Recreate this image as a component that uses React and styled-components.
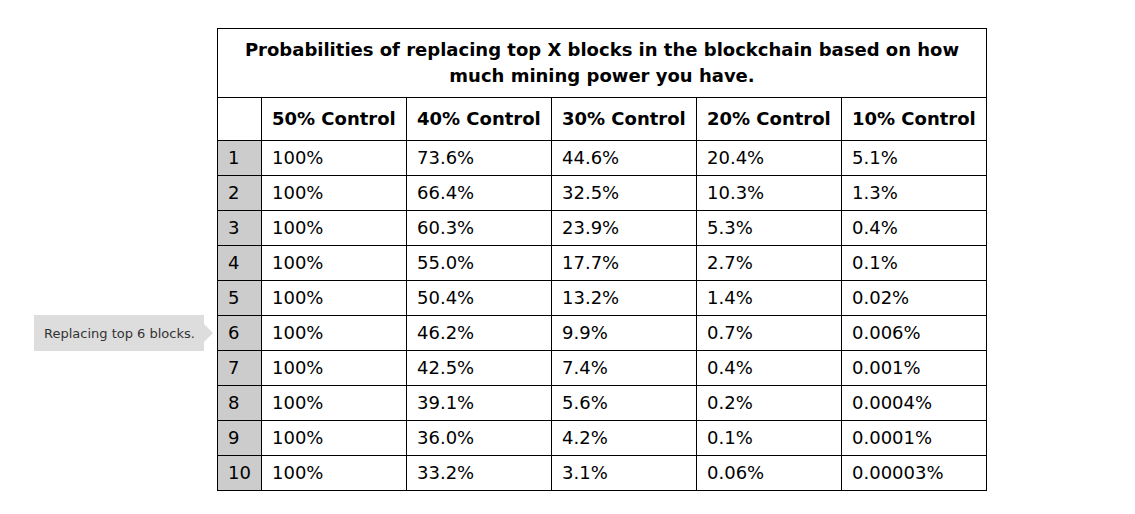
import React from "react";
import styled, { createGlobalStyle } from "styled-components";

const Global = createGlobalStyle`
  html, body { margin: 0; padding: 0; background: #fff; }
  body { font-family: "DejaVu Sans", Verdana, sans-serif; color: #000; }
`;

const Page = styled.div`
  width: 1135px;
  height: 514px;
  padding-top: 28px;
  padding-left: 217px;
  box-sizing: border-box;
  position: relative;
`;

const Table = styled.table`
  border-collapse: collapse;
  table-layout: fixed;
  width: 770px;
  font-size: 18px;
  border: 1px solid #000;
`;

const Caption = styled.caption`
  border: 1px solid #000;
  border-bottom: none;
  font-weight: bold;
  font-size: 18px;
  line-height: 26px;
  padding: 8px 20px 8px;
  text-align: center;
`;

const HeadCell = styled.th`
  border: 1px solid #000;
  height: 40px;
  padding: 0 10px 2px;
  text-align: left;
  font-weight: bold;
  white-space: nowrap;
`;

const Cell = styled.td`
  border: 1px solid #000;
  height: 32px;
  padding: 0 10px 2px;
  text-align: left;
  white-space: nowrap;
  background: ${(p) => (p.$num ? "#cccccc" : "#fff")};
`;

const Tooltip = styled.div`
  position: absolute;
  left: 34px;
  top: 315px;
  width: 170px;
  height: 36px;
  background: #dddddd;
  color: #333;
  font-size: 13px;
  display: flex;
  align-items: center;
  padding-left: 10px;
  box-sizing: border-box;
  &::after {
    content: "";
    position: absolute;
    right: -9px;
    top: 50%;
    margin-top: -9px;
    border-top: 9px solid transparent;
    border-bottom: 9px solid transparent;
    border-left: 9px solid #dddddd;
  }
`;

const rows = [
  ["100%", "73.6%", "44.6%", "20.4%", "5.1%"],
  ["100%", "66.4%", "32.5%", "10.3%", "1.3%"],
  ["100%", "60.3%", "23.9%", "5.3%", "0.4%"],
  ["100%", "55.0%", "17.7%", "2.7%", "0.1%"],
  ["100%", "50.4%", "13.2%", "1.4%", "0.02%"],
  ["100%", "46.2%", "9.9%", "0.7%", "0.006%"],
  ["100%", "42.5%", "7.4%", "0.4%", "0.001%"],
  ["100%", "39.1%", "5.6%", "0.2%", "0.0004%"],
  ["100%", "36.0%", "4.2%", "0.1%", "0.0001%"],
  ["100%", "33.2%", "3.1%", "0.06%", "0.00003%"],
];

export default function App() {
  return (
    <Page>
      <Global />
      <Table>
        <Caption>
          Probabilities of replacing top X blocks in the blockchain based on how much mining power you have.
        </Caption>
        <colgroup>
          <col style={{ width: 44 }} />
          <col style={{ width: 145 }} />
          <col style={{ width: 145 }} />
          <col style={{ width: 145 }} />
          <col style={{ width: 145 }} />
          <col style={{ width: 145 }} />
        </colgroup>
        <thead>
          <tr>
            <HeadCell />
            <HeadCell>50% Control</HeadCell>
            <HeadCell>40% Control</HeadCell>
            <HeadCell>30% Control</HeadCell>
            <HeadCell>20% Control</HeadCell>
            <HeadCell>10% Control</HeadCell>
          </tr>
        </thead>
        <tbody>
          {rows.map((r, i) => (
            <tr key={i}>
              <Cell $num>{i + 1}</Cell>
              {r.map((v, j) => (
                <Cell key={j}>{v}</Cell>
              ))}
            </tr>
          ))}
        </tbody>
      </Table>
      <Tooltip>Replacing top 6 blocks.</Tooltip>
    </Page>
  );
}
